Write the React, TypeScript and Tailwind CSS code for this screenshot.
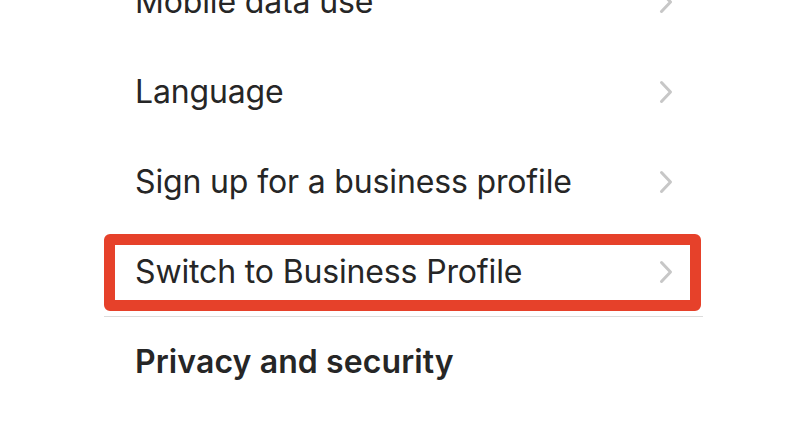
import { ReactNode } from "react";

function Chevron() {
  return (
    <svg width="14" height="24" viewBox="0 0 14 24" fill="none" className="shrink-0">
      <polyline
        points="2.5,2.5 11.5,12 2.5,21.5"
        stroke="#c7c7c7"
        strokeWidth="3"
        strokeLinecap="round"
        strokeLinejoin="round"
      />
    </svg>
  );
}

function Row({ label, highlight, divider }: { label: string; highlight?: boolean; divider?: boolean }) {
  return (
    <div
      className={`relative flex items-center justify-between h-[90px] pl-[31px] pr-[30px] ${
        divider ? "border-b border-[#dcdcdc]" : ""
      }`}
    >
      <span className="text-[32px] text-[#262626] tracking-[-0.15px]">{label}</span>
      <Chevron />
      {highlight && (
        <div className="absolute top-[7px] bottom-[5px] left-0 right-[2px] border-[11px] border-[#e6412a] rounded-[6px]" />
      )}
    </div>
  );
}

function SectionHeader({ children }: { children: ReactNode }) {
  return (
    <div className="flex items-center h-[90px] pl-[31px]">
      <span className="text-[32px] font-semibold text-[#262626] tracking-[0.1px]">{children}</span>
    </div>
  );
}

export default function App() {
  return (
    <div className="w-[812px] h-[440px] overflow-hidden bg-white" style={{ fontFamily: "Inter, 'Liberation Sans', sans-serif" }}>
      <div className="ml-[104px] w-[599px] mt-[-43px]">
        <Row label="Mobile data use" />
        <Row label="Language" />
        <Row label="Sign up for a business profile" />
        <Row label="Switch to Business Profile" highlight divider />
        <SectionHeader>Privacy and security</SectionHeader>
        <div className="mt-[7px]">
          <Row label="Account privacy" />
        </div>
      </div>
    </div>
  );
}
